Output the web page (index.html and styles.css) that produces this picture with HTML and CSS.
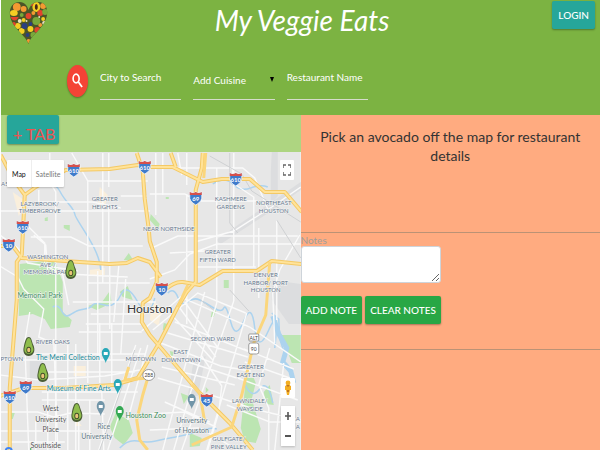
FILE: index.html
```html
<!DOCTYPE html>
<html lang="en">
<head>
<meta charset="utf-8">
<title>My Veggie Eats</title>
<link rel="stylesheet" href="styles.css">
</head>
<body>
<header class="header">
  <div class="brand-row">
    <svg class="logo" viewBox="0 0 40 44" preserveAspectRatio="none" aria-hidden="true">
      <defs><clipPath id="heart"><path d="M20 43C18 35 2 26 1 14C0 5 5 1 11 1C16 1 19 5 20 9C22 4 25 1 30 1C37 1 40 7 39 14C37 27 22 34 20 43Z"/></clipPath></defs>
      <g clip-path="url(#heart)">
        <rect width="40" height="44" fill="#4b5427"/>
        <g fill="#f39a32"><circle cx="8" cy="6" r="4"/><circle cx="15" cy="8" r="3"/><circle cx="35" cy="5" r="3"/><circle cx="25" cy="12" r="2"/><circle cx="20" cy="40" r="2"/><circle cx="32" cy="24" r="2"/></g>
        <g fill="#f4cf24"><ellipse cx="5" cy="12" rx="4" ry="3"/><ellipse cx="28" cy="6" rx="4" ry="5"/><circle cx="9" cy="25" r="3"/><circle cx="22" cy="28" r="3"/><circle cx="13" cy="30" r="3"/><circle cx="35" cy="18" r="2"/><circle cx="15" cy="19" r="2"/></g>
        <g fill="#e2432d"><path d="M1 16h9q-4 7-9 0"/><circle cx="20" cy="15" r="3"/><circle cx="32" cy="12" r="3"/><circle cx="29" cy="29" r="3"/><circle cx="23" cy="3" r="2"/><circle cx="5" cy="23" r="2"/></g>
        <g fill="#79a83b"><circle cx="28" cy="20" r="4"/><circle cx="13" cy="14" r="2"/><circle cx="25" cy="34" r="3"/><circle cx="37" cy="11" r="3"/></g>
        <g fill="#2b3f82"><circle cx="16" cy="25" r="3"/><circle cx="22" cy="23" r="2"/><circle cx="19" cy="34" r="2"/></g>
        <g fill="#e9e3c4"><circle cx="11" cy="20" r="2"/><circle cx="36" cy="22" r="2"/><circle cx="18" cy="20" r="1"/><circle cx="31" cy="16" r="1"/></g>
        <ellipse cx="28" cy="6" rx="1.5" ry="3" fill="#452719"/>
      </g>
    </svg>
    <h1 class="title">My Veggie Eats</h1>
    <button class="btn login" type="button">LOGIN</button>
  </div>
  <form class="search">
    <button class="search-btn" type="button" aria-label="Search">
      <svg viewBox="0 0 12 16" preserveAspectRatio="none"><ellipse cx="4.5" cy="5.5" rx="3.3" ry="4.3" fill="none" stroke="#fff" stroke-width="1.8"/><path d="M7 9l4 5" stroke="#fff" stroke-width="2"/></svg>
    </button>
    <input class="field" type="text" placeholder="City to Search" aria-label="City to Search">
    <div class="select-wrap">
      <select class="field select" aria-label="Add Cuisine"><option>Add Cuisine</option></select>
      <svg class="caret" viewBox="0 0 4 5"><path d="M0 0h4L2 5z"/></svg>
    </div>
    <input class="field" type="text" placeholder="Restaurant Name" aria-label="Restaurant Name">
  </form>
</header>
<main class="content">
  <section class="left">
    <nav class="tabs"><button class="tab" type="button">+ TAB</button></nav>
    <div class="map">
      <svg class="map-art" viewBox="1 152 300 298" preserveAspectRatio="xMidYMid slice" role="img" aria-label="Map of Houston">
        <defs>
          <g id="shield"><path d="M-6-6Q-3-4 0-6Q3-4 6-6L6-2Q7 3 0 7Q-7 3-6-2Z" fill="#3f7bcb" stroke="#fff" stroke-width=".7"/><path d="M-6-6Q-3-4 0-6Q3-4 6-6V-3H-6Z" fill="#d7504b"/></g>
          <g id="avocado"><path d="M0-10C3-10 3-5 5-1C7 5 4 9 0 9C-5 9-6 4-5 0C-4-5-3-10 0-10Z" fill="#4b5e36"/><path d="M0-9C2-9 3-4 4 0C6 4 3 7 0 7C-4 7-5 3-4 0C-3-4-2-9 0-9Z" fill="#8fbd4c"/><ellipse cy="3" rx="2.4" ry="3.2" fill="#3f4d28"/><ellipse cy="3" rx="1.6" ry="2.3" fill="#eac47a"/></g>
          <g id="pin"><path d="M0 8C-1 4-4 2-4-2A4 5 0 0 1 4-2C4 2 1 4 0 8Z"/><rect x="-2" y="-3" width="4" height="3" fill="#fff"/></g>
        </defs>
        <rect x="1" y="152" width="300" height="298" fill="#e7e7e7"/>
        <g fill="#dcdddf"><path d="M272 152h6v44l-7 8v-32zM216 240l50-34 35-24v8l-34 24-46 30zM272 280l29 4v40h-12l-17-24zM30 360h13v20H30zM194 360l12-4-8 40h-10z"/></g>
        <g fill="#faefdc"><path d="M13 192l14 10-8 14zM100 187l8 8-3 12h-7zM90 270l15-2v7H90zM152 300l10 8-3 18-9-6zM74 366h12v10H74zM76 418l6 8h-6z"/></g>
        <g fill="#bce5b2"><path d="M20 264l35-4 8 22v30l9 8-2 7-19 2-6-10-12-5-14 2zM124 260l5-7 5 8zM120 292l8-6 5 14-10-3zM88 306l15-5 7-10 2 12-15 7zM45 218l3-1v4h-3zM64 225h6v6l-6-3zM166 197h3v2h-3zM151 214l9 10-2 5-8-9zM224 280h5v8h-5zM212 312l5-4-3 9h-3zM246 378l8 0 2 5-4 16 9 30-5 14-11-2-4-13 3-28zM264 392l6-7 4 20-8-1zM116 413l13 7 4 13-9 12-9-7-5-11zM181 393l8 3-5 8zM206 387l3 3-3 3zM190 433l12 5-2 8-10 1zM170 351l4 1-2 7zM282 335h19v28h-9zM11 412l4 1-2 6h-3zM164 323l4 1-1 6h-4z"/></g>
        <g fill="none" stroke="#acd3ef" stroke-width="1.5">
          <path d="M32 174C45 190 54 179 60 191S74 207 75 214 100 248 101 270M53 307q6-3 9 4t8 4 7-4 8-2 8-4 12 0 16-10 17 7 17-4M168 293q6-6 10 4t10 5 12-2 14 8 10 0 7 14 13-1 11 7 14 2 6 18M272 313l7 6 1 20 4 12M120 448q8-9 18-7t18 0 20-4 23-6 18-2M245 384q7 16 15 5t13 14M213 184q12-8 20 0t18 4 17-1"/>
          <path d="M273 316l6 18 8 14-4 14 8 9 3 12" stroke-width="5"/>
        </g>
        <g fill="none" stroke="#fafafa" stroke-width="1.4">
          <path d="M50 153v29l6 10V450M72 153l16 28v90M109 153v34M88 181h60M103 153v130M39 190v12h54l28 6M0 211h150M34 235l12 10 2 28 80 4M109 208v57M121 196h26M156 153v62M163 153v42M178 153l4 22M187 153v32M187 194v130M217 168v135M234 153v148M173 168h70l12 10 13 31M233 168v15l21 14v70M150 194h35l12 7h60M301 187l-29 20-38 24-39 11M150 249l28-13h120M170 253l35-2M196 267h60M259 228v70M277 220v100M300 235l-20 35-7 23 2 50M150 279l25-9 15-16 27-10h84M27 225l18 18v22l18 10 6 30M0 235l18 13 10 15 50 8M31 237h40l18 9h54M88 271v60M98 271v90M110 265v64M119 266l-5 56M126 279l-5 75M88 283h62M73 302h83M91 314h54M86 324h56M79 332h63M0 266l18 11 6 12 20 20-5 28 12 5"/>
          <path d="M30 312l-5 30 4 108M54 339l4 111M68 345v105M76 344v106M88 327v56M100 323v60M112 323v60M0 360h135M30 354h115M45 372h90M0 375l40 5 65-4 35-6M42 392h96M42 400h63M0 412h38l16 5 17-4 34 1M0 431h90M0 442h65M36 417v33M48 392v58M79 400v50M90 400v50M102 391l2 59M136 345l-37 105M141 348l-33 102M148 345l-20 75M142 331l39-34 69 30 51 35M153 330l45-37 48 20M161 343l60 23 30 5M168 333l80 24M175 322l80 32M167 355l70 23M162 367l73 18M158 378l41 12M172 315l41 45M180 308l36 49M185 302l34 47M205 292l-42 158M217 303l-43 147M234 301l-52 149M247 313l-40 137M202 356l20 30-3 26-11 38M227 405l18 7 25 10h31M245 362l45 16M238 378l60 22M244 349l50 20M208 394l50 16 43 10M270 348l-11 37 10 23v42M284 363l-9 87M150 414l35-2 31 15M150 430l50-2 38 22M165 402l45 20"/>
        </g>
        <path d="M210 156l32 18 10 17 49 31M230 153v70l8 10M201 300l13 10M135 350l-35 100M230 290l19 21M277 220l24 38" fill="none" stroke="#cfd1d3" stroke-width="1"/>
        <g fill="none" stroke="#f4c965" stroke-width="4" stroke-linejoin="round">
          <path d="M1 155L14 180 25 195 22 255 17 262 17 300 13 350 10 388V450M25 195L36 187 66 170 110 169 138 165 150 167 173 167 203 182 222 179 250 179 265 192 285 192 302 212M137 153l6 18 2 28 4 30 1 12 7 21v20l-7 16-7 5-1 19 8 13 13 15 37 43 30 30 23 27M171 153l5 14M203 153l-1 15-6 22v92l-9 10-9 15-18 35-22 36-24 7-50 3H24L0 396M1 246l12 0 9 12 58 4 30 2 17-1 11-5 12 4 11 15M165 290q10-9 18-8l17 3 23-14h34l15-10 30 3"/>
        </g>
        <path fill="none" stroke="#ffe39a" stroke-width="2" d="M1 155L14 180 25 195 22 255 17 262 17 300 13 350 10 388V450M25 195L36 187 66 170 110 169 138 165 150 167 173 167 203 182 222 179 250 179 265 192 285 192 302 212M137 153l6 18 2 28 4 30 1 12 7 21v20l-7 16-7 5-1 19 8 13 13 15 37 43 30 30 23 27M171 153l5 14M203 153l-1 15-6 22v92l-9 10-9 15-18 35-22 36-24 7-50 3H24L0 396M1 246l12 0 9 12 58 4 30 2 17-1 11-5 12 4 11 15M165 290q10-9 18-8l17 3 23-14h34l15-10 30 3"/>
        <path fill="none" stroke="#fbd67c" stroke-width="3" d="M270 262l-4 53-12 28-12 52-10 32-40 18M129 367l-4 13 23-2-5 17-6 25 3 20 8 10M192 385l8 8 5 29M206 153l-2 25M178 307l10-22"/>
        <g class="area" text-anchor="middle">
          <text x="40" y="206">LAZYBROOK/</text><text x="40" y="213">TIMBERGROVE</text>
          <text x="105" y="201">GREATER</text><text x="105" y="209">HEIGHTS</text>
          <text x="231" y="201">KASHMERE</text><text x="231" y="209">GARDENS</text>
          <text x="274" y="205">NORTHEAST</text><text x="274" y="213">HOUSTON</text>
          <text x="169" y="231">NEAR NORTHSIDE</text>
          <text x="48" y="259">WASHINGTON</text><text x="48" y="267">AVE /</text><text x="48" y="274">MEMORIAL PARK</text>
          <text x="218" y="254">GREATER</text><text x="218" y="262">FIFTH WARD</text>
          <text x="266" y="277">DENVER</text><text x="266" y="285">HARBOR/ PORT</text><text x="266" y="292">HOUSTON</text>
          <text x="213" y="341">SECOND WARD</text><text x="53" y="344">RIVER OAKS</text>
          <text x="12" y="361">PTOWN</text><text x="141" y="361">MIDTOWN</text>
          <text x="181" y="354">EAST</text><text x="181" y="362">DOWNTOWN</text>
          <text x="251" y="369">GREATER</text><text x="251" y="377">EAST END</text>
          <text x="250" y="403">LAWNDALE/</text><text x="250" y="411">WAYSIDE</text>
          <text x="229" y="441">GULFGATE/</text><text x="229" y="449">PINE VALLEY</text>
          <text x="298" y="421">A</text><text x="298" y="429">A</text><text x="5" y="186">AS</text>
        </g>
        <text class="city" x="150" y="313" text-anchor="middle">Houston</text>
        <g class="place" text-anchor="middle">
          <text class="park" x="40" y="298">Memorial Park</text><text class="park" x="146" y="418">Houston Zoo</text>
          <text class="museum" x="68" y="360">The Menil Collection</text><text class="museum" x="79" y="391">Museum of Fine Arts</text>
          <text x="51" y="411">West</text><text x="51" y="422">University</text><text x="51" y="432">Place</text>
          <text x="46" y="448">Southside</text>
          <text class="school" x="104" y="429">Rice</text><text class="school" x="97" y="439">University</text>
          <text class="school" x="192" y="423">University</text><text class="school" x="192" y="433">of Houston</text>
        </g>
        <g class="shields" text-anchor="middle">
          <g transform="translate(74 170)"><use href="#shield"/><text y="3">610</text></g>
          <g transform="translate(145 167)"><use href="#shield"/><text y="3">610</text></g>
          <g transform="translate(236 179)"><use href="#shield"/><text y="3">610</text></g>
          <g transform="translate(23 227)"><use href="#shield"/><text y="3">610</text></g>
          <g transform="translate(10 397)"><use href="#shield"/><text y="3">610</text></g>
          <g transform="translate(196 198)"><use href="#shield"/><text y="3">69</text></g>
          <g transform="translate(9 245)"><use href="#shield"/><text y="3">10</text></g>
          <g transform="translate(162 289)"><use href="#shield"/><text y="3">10</text></g>
          <g transform="translate(26 387)"><use href="#shield"/><text y="3">69</text></g>
          <g transform="translate(207 400)"><use href="#shield"/><text y="3">45</text></g>
        </g>
        <g class="routes" text-anchor="middle" fill="#fff" stroke="#777" stroke-width=".7">
          <rect x="249" y="334" width="10" height="7" rx="1"/><rect x="249" y="343" width="10" height="11" rx="2"/><ellipse cx="149" cy="375" rx="6" ry="5.5"/>
          <text x="254" y="340">ALT</text><text x="254" y="351">90</text><text x="149" y="377">288</text>
        </g>
        <use href="#pin" x="106" y="355" fill="#28a8b8"/><use href="#pin" x="118" y="386" fill="#28a8b8"/>
        <use href="#pin" x="101" y="408" fill="#7195a8"/><use href="#pin" x="192" y="401" fill="#7195a8"/><use href="#pin" x="120" y="413" fill="#34a853"/>
        <use href="#avocado" x="71" y="270"/><use href="#avocado" x="29" y="347"/><use href="#avocado" x="43" y="373"/><use href="#avocado" x="77" y="413"/>
        <circle cx="9" cy="451" r="3" fill="none" stroke="#4285f4" stroke-width="2"/>
        <path d="M31 448v4" stroke="#34a853"/>
      </svg>
      <div class="map-type"><button class="active" type="button">Map</button><button type="button">Satellite</button></div>
      <button class="control full" type="button" aria-label="Toggle fullscreen"><svg viewBox="0 0 8 12" preserveAspectRatio="none"><path d="M0 4V1H3M5 1H8V4M8 8V11H5M3 11H0V8" fill="none" stroke="#666" stroke-width="1.5"/></svg></button>
      <div class="tools">
        <button class="control person" type="button" aria-label="Street View"><svg viewBox="0 0 8 16"><circle cx="4" cy="3" r="2.4" fill="#f3ae22"/><path d="M1 6Q4 4 7 6V10H6L5 15H3L2 10H1Z" fill="#f3ae22"/><path d="M2 5h4l-2 2zM3 10h2v2H3z" fill="#bf731d"/></svg></button>
        <div class="zoom"><button class="control" type="button" aria-label="Zoom in"><svg viewBox="0 0 6 8" preserveAspectRatio="none"><path d="M0 4h6M3 0v8" stroke="#555" stroke-width="1.6"/></svg></button><button class="control" type="button" aria-label="Zoom out"><svg viewBox="0 0 6 8" preserveAspectRatio="none"><path d="M0 4h6" stroke="#555" stroke-width="2"/></svg></button></div>
      </div>
    </div>
  </section>
  <aside class="panel">
    <h2 class="prompt">Pick an avocado off the map for restaurant details</h2>
    <form class="notes">
      <label class="notes-label" for="notes">Notes</label>
      <textarea class="note-box" id="notes"></textarea>
      <div class="actions"><button class="btn green" type="button">ADD NOTE</button><button class="btn green" type="button">CLEAR NOTES</button></div>
    </form>
  </aside>
</main>
</body>
</html>
```
FILE: styles.css
```css
* { box-sizing: border-box; }
body { margin: 0; padding-left: 1px; min-height: 100vh; display: flex; flex-direction: column; overflow: hidden; font-family: Lato, "Open Sans", sans-serif; background: #fff; }
button, input, select, textarea { font: inherit; }
button { padding: 0; border: 0; }
.header { background: #7cb342; padding-bottom: 15px; }
.brand-row { display: grid; grid-template-columns: 1fr auto 1fr; align-items: start; height: 65px; padding: 1px 5px 0 8px; }
.logo { width: 39px; height: 44px; }
.title { margin: 0; color: #fff; font-size: 28px; font-style: italic; font-weight: 400; line-height: 38px; }
.btn { height: 28px; border-radius: 2px; color: #fff; font-size: 10px; font-weight: 500; background: #26a69a; box-shadow: 0 1px 2px #0005; }
.login { justify-self: end; padding: 0 6px; }
.search { display: flex; align-items: flex-start; margin: 0 232px 0 66px; gap: 12px; height: 35px; }
.search-btn { width: 21px; height: 32px; flex: none; display: grid; place-items: center; border-radius: 50%; background: #f44336; box-shadow: 0 1px 2px #0005; }
.search-btn svg { width: 11px; height: 16px; }
.field { flex: 1; width: 0; min-width: 0; height: 35px; padding: 0 0 10px; border: 0; border-bottom: 1px solid #d5dccb; border-radius: 0; outline: 0; background: transparent; color: #fff; font-size: 10px; }
.field::placeholder { color: #fff; opacity: 1; }
.select-wrap { flex: 1; position: relative; display: flex; min-width: 0; }
.select { appearance: none; padding-bottom: 4px; }
.caret { position: absolute; right: 1px; top: 12px; width: 4px; height: 5px; }
.content { flex: 1; display: grid; grid-template-columns: 1fr 1fr; min-height: 335px; }
.left { display: flex; flex-direction: column; }
.tabs { height: 37px; background: #aed581; padding: 0 6px; }
.tab { height: 29px; padding: 9px 4px 0 6px; border-radius: 2px; color: #ef5350; background: #26a69a; font-size: 16px; line-height: 20px; box-shadow: 0 1px 2px #0005; }
.map { flex: 1; position: relative; min-height: 298px; overflow: hidden; }
.map-art { position: absolute; width: 100%; height: 100%; }
.area { font-size: 6px; fill: #66788e; stroke: #f4f4f4; stroke-width: 1px; paint-order: stroke; }
.city { font-size: 12px; fill: #333; stroke: #fff; stroke-width: 1px; paint-order: stroke; }
.place { font-size: 7px; fill: #555; stroke: #f6f6f6; stroke-width: 1px; paint-order: stroke; }
.place .park { fill: #398b56; }
.place .museum { fill: #178896; }
.place .school { fill: #617783; }
.shields text { font-size: 6px; font-weight: 700; fill: #fff; }
.routes text { font-size: 5px; fill: #444; stroke: none; }
.map-type { position: absolute; left: 6px; top: 8px; display: flex; height: 27px; background: #fff; border-radius: 1px; box-shadow: 0 1px 2px #0003; }
.map-type button { padding: 0 4px; background: transparent; color: #777; font-size: 7px; }
.map-type .active { padding: 0 5px; color: #111; border-right: 1px solid #eee; }
.control { width: 14px; height: 20px; display: grid; place-items: center; background: #fff; border-radius: 1px; }
.control svg { width: 6px; height: 8px; }
.full { position: absolute; right: 7px; top: 8px; }
.full svg { width: 8px; height: 12px; }
.tools { position: absolute; right: 6px; bottom: 4px; display: grid; gap: 8px; }
.person svg { width: 8px; height: 16px; }
.zoom { background: #fff; box-shadow: 0 1px 2px #0003; }
.panel { background: #ffab80; }
.prompt { margin: 0; padding: 12px 18px 0; height: 118px; border-bottom: 1px solid #bb9275; color: #333; text-align: center; font-size: 14px; font-weight: 400; line-height: 19px; }
.notes { height: 117px; border-bottom: 1px solid #bb9275; }
.notes-label { display: block; height: 13px; line-height: 15px; color: #9e9e9e; font-size: 10px; }
.note-box { display: block; width: 140px; height: 37px; border: 1px solid #ced4da; border-radius: 3px; background: #fff; }
.actions { display: flex; gap: 3px; margin-top: 13px; }
.green { background: #28a745; padding: 0 5px; }
```
